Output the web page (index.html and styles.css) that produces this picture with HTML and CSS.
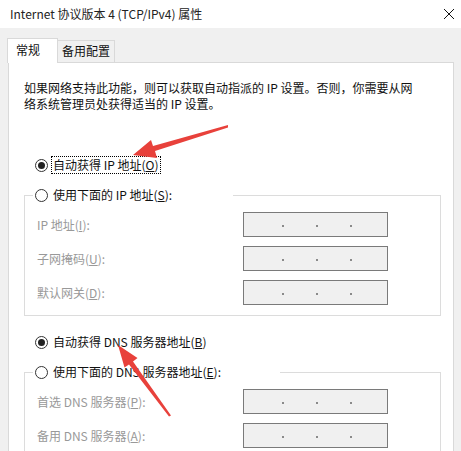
FILE: index.html
```html
<!DOCTYPE html>
<html>
    <head>
        <meta charset="UTF-8">
        <title>Internet 协议版本 4 (TCP/IPv4) 属性</title>
        <link rel="stylesheet" href="styles.css">
    </head>
    <body>
        <div class="titlebar">
            <span class="title">Internet 协议版本 4 (TCP/IPv4) 属性</span>
            <svg class="close" width="12" height="12" viewBox="0 0 12 12">
                <path d="M1 1 L11 11 M11 1 L1 11" stroke="#111" stroke-width="1" fill="none"/>
            </svg>
        </div>
        <div class="dialog">
            <div class="tabs">
                <div class="tab active">常规</div>
                <div class="tab">备用配置</div>
            </div>
            <div class="panel">
                <p class="intro">如果网络支持此功能，则可以获取自动指派的 IP 设置。否则，你需要从网<br>络系统管理员处获得适当的 IP 设置。</p>

                <div class="radio-row first">
                    <span class="radio checked"></span>
                    <span class="caption focus">自动获得 IP 地址(<u>O</u>)</span>
                </div>

                <fieldset class="group">
                    <legend class="radio-row ip-legend">
                        <span class="radio"></span>
                        <span class="caption">使用下面的 IP 地址(<u>S</u>):</span>
                    </legend>
                    <div class="field">
                        <span class="label">IP 地址(<u>I</u>):</span>
                        <span class="ipbox"><i></i><i></i><i></i></span>
                    </div>
                    <div class="field">
                        <span class="label">子网掩码(<u>U</u>):</span>
                        <span class="ipbox"><i></i><i></i><i></i></span>
                    </div>
                    <div class="field">
                        <span class="label">默认网关(<u>D</u>):</span>
                        <span class="ipbox"><i></i><i></i><i></i></span>
                    </div>
                </fieldset>

                <div class="radio-row dns-auto">
                    <span class="radio checked"></span>
                    <span class="caption">自动获得 DNS 服务器地址(<u>B</u>)</span>
                </div>

                <fieldset class="group">
                    <legend class="radio-row dns-legend">
                        <span class="radio"></span>
                        <span class="caption">使用下面的 DNS 服务器地址(<u>E</u>):</span>
                    </legend>
                    <div class="field">
                        <span class="label">首选 DNS 服务器(<u>P</u>):</span>
                        <span class="ipbox"><i></i><i></i><i></i></span>
                    </div>
                    <div class="field">
                        <span class="label">备用 DNS 服务器(<u>A</u>):</span>
                        <span class="ipbox"><i></i><i></i><i></i></span>
                    </div>
                </fieldset>
            </div>
        </div>

        <!-- annotation arrows drawn over the dialog -->
        <svg class="arrows" width="461" height="451" viewBox="0 0 461 451">
            <polygon fill="#e8413b" points="133,155 151,140 153,146 228,125 228,127.5 155,151 157,158"/>
            <polygon fill="#e8413b" points="118,345 137.5,358 133,361.5 171,415.5 169,416.5 129,364.5 124.5,367.5"/>
        </svg>
    </body>
</html>
```

FILE: styles.css
```css
html, body {
    margin: 0;
    padding: 0;
}

body {
    width: 461px;
    height: 451px;
    overflow: hidden;
    position: relative;
    background: #f0f0f0;
    font: 12px/16px "Noto Sans CJK SC", "Liberation Sans", sans-serif;
    color: #111;
}

.titlebar {
    height: 28px;
    background: #fff;
    display: flex;
    align-items: center;
    justify-content: space-between;
    padding: 0 6px 0 10px;
}

.title {
    color: #222;
}

.close {
    display: block;
    margin-top: -1px;
}

.dialog {
    padding-top: 10px;
}

.tabs {
    display: flex;
    align-items: flex-end;
    padding-left: 7px;
    height: 25px;
    margin-bottom: -1px;
    position: relative;
    z-index: 1;
}

.tab {
    box-sizing: border-box;
    height: 22px;
    margin-bottom: 1px;
    padding: 2px 0 0 4px;
    width: 57px;
    border: 1px solid #d9d9d9;
    border-left: none;
    border-bottom: none;
    background: #f0f0f0;
}

.tab.active {
    height: 25px;
    margin-bottom: 0;
    width: 51px;
    padding: 3px 0 0 8px;
    border-left: 1px solid #d9d9d9;
    background: #fff;
}

.panel {
    margin-left: 8px;
    width: 417px;
    height: 371px;
    overflow: hidden;
    background: #fff;
    border: 1px solid #d9d9d9;
    border-bottom: none;
    padding: 17px 12px 0 15px;
}

.intro {
    margin: 0;
}

.radio-row {
    display: flex;
    align-items: center;
    height: 18px;
}

.radio-row.first {
    margin-top: 44px;
    padding-left: 11px;
}

.radio-row.dns-auto {
    margin-top: 17px;
    padding-left: 11px;
}

.radio {
    box-sizing: border-box;
    width: 13px;
    height: 13px;
    border: 1px solid #333;
    border-radius: 50%;
    background: #fff;
    margin-right: 3px;
    display: flex;
    align-items: center;
    justify-content: center;
}

.radio.checked::after {
    content: "";
    width: 7px;
    height: 7px;
    border-radius: 50%;
    background: #222;
}

.caption {
    box-sizing: border-box;
    height: 18px;
    line-height: 16px;
    padding: 0 1px;
    border: 1px solid transparent;
}

.caption.focus {
    border: 1px dotted #000;
}

.group {
    margin: 12px 0 0 0;
    padding: 8px 0 10px 8px;
    border: 1px solid #dcdcdc;
}

.group legend {
    padding: 0 0 0 2px;
    margin-left: 0;
    background: #fff;
    box-sizing: border-box;
}

.ip-legend {
    width: 200px;
}

.dns-legend {
    width: 247px;
}

.field {
    display: flex;
    align-items: center;
    height: 25px;
    margin: 0 0 9px 4px;
}

.field:last-child {
    margin-bottom: 0;
}

.label {
    width: 206px;
    color: #999;
}

.ipbox {
    box-sizing: border-box;
    width: 145px;
    height: 25px;
    border: 1px solid #7a7a7a;
    background: #f0f0f0;
    display: flex;
    align-items: center;
    padding: 3px 0 0 38px;
    gap: 32px;
}

.ipbox i {
    width: 2px;
    height: 2px;
    background: #8a8a8a;
}

.arrows {
    position: absolute;
    left: 0;
    top: 0;
    pointer-events: none;
}
```
